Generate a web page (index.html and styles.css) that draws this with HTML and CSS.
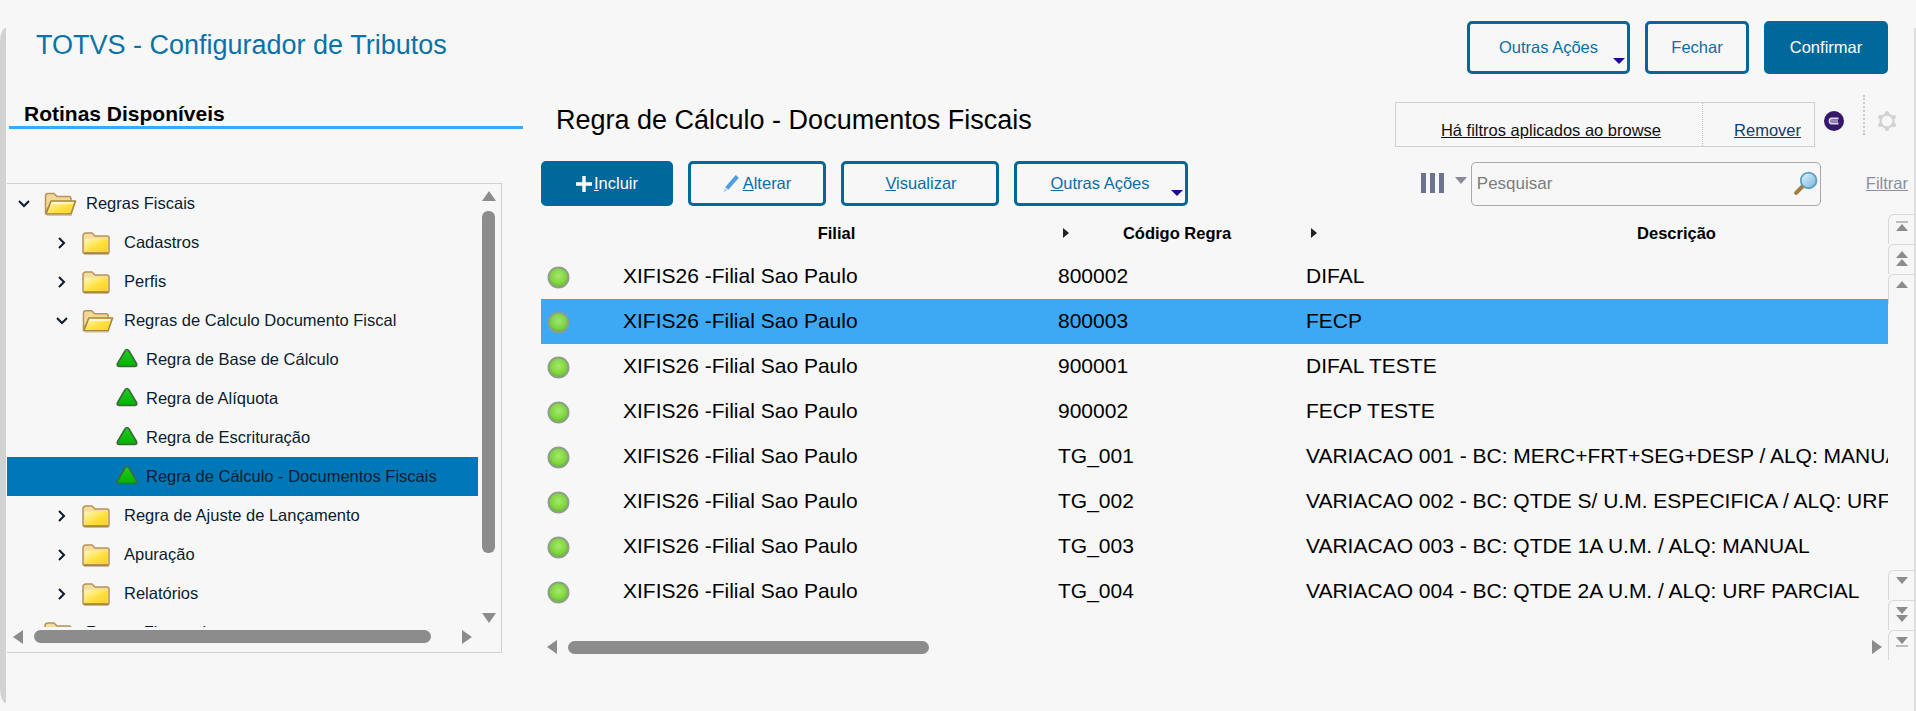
FILE: index.html
```html
<!DOCTYPE html>
<html>
    <head>
        <title>TOTVS - Configurador de Tributos</title>
        <meta charset="UTF-8">
        <meta name="viewport" content="width=device-width, initial-scale=1.0">
        <link rel="stylesheet" href="styles.css">
    </head>
    <body>
        <svg class="sprite" xmlns="http://www.w3.org/2000/svg">
            <defs>
                <linearGradient id="folder-fill" x1="0" y1="0" x2="1" y2="1">
                    <stop offset="0" stop-color="#fff6c0"/>
                    <stop offset="0.4" stop-color="#ffe866"/>
                    <stop offset="0.55" stop-color="#ffe040"/>
                    <stop offset="1" stop-color="#f8d028"/>
                </linearGradient>
                <radialGradient id="led-fill" cx="0.5" cy="0.42" r="0.55">
                    <stop offset="0" stop-color="#a6e86c"/>
                    <stop offset="0.7" stop-color="#7fd63c"/>
                    <stop offset="1" stop-color="#62b82a"/>
                </radialGradient>
                <linearGradient id="leaf-fill" x1="0" y1="0" x2="0" y2="1">
                    <stop offset="0" stop-color="#1ed01e"/>
                    <stop offset="1" stop-color="#04b004"/>
                </linearGradient>
                <linearGradient id="lens-fill" x1="0" y1="0" x2="1" y2="1">
                    <stop offset="0" stop-color="#e9f6fb"/>
                    <stop offset="1" stop-color="#6fb6dc"/>
                </linearGradient>
            </defs>
            <symbol id="folder" viewBox="0 0 28 24">
                <path d="M2 23.500H27" stroke="#cfcac0" stroke-width="1"/>
                <path d="M1 21V5Q1 2 4 2H10L13 5H25Q27 5 27 7V21Q27 22.500 25 22.500H3Q1 22.500 1 21Z" fill="#f3dc9c" stroke="#b8935a" stroke-width="1.500"/>
                <path d="M2.500 21V7.500H25.500V21Z" fill="url(#folder-fill)"/>
                <path d="M2 22H26" stroke="#a47f42" stroke-width="1.500"/>
            </symbol>
            <symbol id="folder-open" viewBox="0 0 33 24">
                <path d="M3 23.500H28" stroke="#cfcac0" stroke-width="1"/>
                <path d="M1.500 20V4Q1.500 1.500 4 1.500H10L13 4.500H25Q27 4.500 27 6.500V10H8Z" fill="#f0d896" stroke="#b8935a" stroke-width="1.500"/>
                <path d="M7 9H31.500L27 22H2Z" fill="url(#folder-fill)" stroke="#a98544" stroke-width="1.600" stroke-linejoin="round"/>
                <path d="M8 11H29" stroke="#fffdf0" stroke-width="1.500"/>
            </symbol>
            <symbol id="leaf" viewBox="0 0 22 21">
                <path d="M11 1.500Q12 1.500 13 3L20.500 15.500Q21.500 18.500 18.500 18.500H3.500Q0.500 18.500 1.500 15.500L9 3Q10 1.500 11 1.500Z" fill="url(#leaf-fill)" stroke="#3c6a3c" stroke-width="1.700"/>
            </symbol>
            <symbol id="led" viewBox="0 0 23 23">
                <circle cx="11.500" cy="11.500" r="10" fill="url(#led-fill)" stroke="#8f9f8a" stroke-width="2"/>
            </symbol>
        </svg>

        <div class="edge"></div>
        <div class="page">
            <header class="top">
                <div class="app-title">TOTVS - Configurador de Tributos</div>
                <div class="top-actions">
                    <button class="btn btn-more top-more">Outras Ações</button>
                    <button class="btn top-close">Fechar</button>
                    <button class="btn btn-primary top-ok">Confirmar</button>
                </div>
            </header>

            <div class="content">
                <aside class="side">
                    <div class="side-heading">Rotinas Disponíveis</div>
                    <div class="tree-box">
                        <div class="tree">
                            <div class="node lvl-0">
                                <svg class="chev" viewBox="0 0 12 12"><path d="M1 3L6 8L11 3"/></svg>
                                <svg class="ico-open-lg"><use href="#folder-open"/></svg>
                                <span>Regras Fiscais</span>
                            </div>
                            <div class="node lvl-1">
                                <svg class="chev" viewBox="0 0 12 12"><path d="M3 1L8 6L3 11"/></svg>
                                <svg class="ico-folder"><use href="#folder"/></svg>
                                <span>Cadastros</span>
                            </div>
                            <div class="node lvl-1">
                                <svg class="chev" viewBox="0 0 12 12"><path d="M3 1L8 6L3 11"/></svg>
                                <svg class="ico-folder"><use href="#folder"/></svg>
                                <span>Perfis</span>
                            </div>
                            <div class="node lvl-1">
                                <svg class="chev" viewBox="0 0 12 12"><path d="M1 3L6 8L11 3"/></svg>
                                <svg class="ico-open"><use href="#folder-open"/></svg>
                                <span>Regras de Calculo Documento Fiscal</span>
                            </div>
                            <div class="node lvl-2">
                                <svg class="ico-leaf"><use href="#leaf"/></svg>
                                <span>Regra de Base de Cálculo</span>
                            </div>
                            <div class="node lvl-2">
                                <svg class="ico-leaf"><use href="#leaf"/></svg>
                                <span>Regra de Alíquota</span>
                            </div>
                            <div class="node lvl-2">
                                <svg class="ico-leaf"><use href="#leaf"/></svg>
                                <span>Regra de Escrituração</span>
                            </div>
                            <div class="node lvl-2 node-active">
                                <svg class="ico-leaf"><use href="#leaf"/></svg>
                                <span>Regra de Cálculo - Documentos Fiscais</span>
                            </div>
                            <div class="node lvl-1">
                                <svg class="chev" viewBox="0 0 12 12"><path d="M3 1L8 6L3 11"/></svg>
                                <svg class="ico-folder"><use href="#folder"/></svg>
                                <span>Regra de Ajuste de Lançamento</span>
                            </div>
                            <div class="node lvl-1">
                                <svg class="chev" viewBox="0 0 12 12"><path d="M3 1L8 6L3 11"/></svg>
                                <svg class="ico-folder"><use href="#folder"/></svg>
                                <span>Apuração</span>
                            </div>
                            <div class="node lvl-1">
                                <svg class="chev" viewBox="0 0 12 12"><path d="M3 1L8 6L3 11"/></svg>
                                <svg class="ico-folder"><use href="#folder"/></svg>
                                <span>Relatórios</span>
                            </div>
                            <div class="node lvl-0">
                                <svg class="chev" viewBox="0 0 12 12"><path d="M3 1L8 6L3 11"/></svg>
                                <svg class="ico-folder-lg"><use href="#folder"/></svg>
                                <span>Regras Financeiras</span>
                            </div>
                        </div>
                        <div class="vbar">
                            <div class="arrow-up"></div>
                            <div class="vbar-thumb"></div>
                            <div class="arrow-down"></div>
                        </div>
                        <div class="hbar hbar-tree">
                            <div class="arrow-left"></div>
                            <div class="hbar-track"><div class="hbar-thumb thumb-tree"></div></div>
                            <div class="arrow-right"></div>
                        </div>
                    </div>
                </aside>

                <main class="main">
                    <div class="main-top">
                        <div class="main-title">Regra de Cálculo - Documentos Fiscais</div>
                        <div class="filter-box">
                            <a class="filter-note">Há filtros aplicados ao browse</a>
                            <a class="filter-remove">Remover</a>
                        </div>
                        <svg class="ico-badge" viewBox="0 0 20 20">
                            <circle cx="10" cy="10" r="10" fill="#35186a"/>
                            <path d="M14.500 7.500H7.500Q5.500 7.500 5.500 10Q5.500 12.500 7.500 12.500H14.500" fill="none" stroke="#dcd6ea" stroke-width="1.800"/>
                            <path d="M7 10H14" stroke="#dcd6ea" stroke-width="1.200"/>
                        </svg>
                        <div class="dots"></div>
                        <svg class="ico-gear" viewBox="0 0 20 20">
                            <circle cx="10" cy="10" r="6.500" fill="none" stroke="#d4d4d4" stroke-width="2.500"/>
                            <g fill="#d0d0d0">
                                <circle cx="10" cy="2" r="2"/>
                                <circle cx="10" cy="18" r="2"/>
                                <circle cx="3" cy="6" r="2"/>
                                <circle cx="17" cy="6" r="2"/>
                                <circle cx="3" cy="14" r="2"/>
                                <circle cx="17" cy="14" r="2"/>
                            </g>
                        </svg>
                    </div>

                    <div class="toolbar">
                        <button class="btn btn-primary tool-add">
                            <svg class="ico-plus" viewBox="0 0 14 14"><path d="M5.500 0H8.500V5.500H14V8.500H8.500V14H5.500V8.500H0V5.500H5.500Z"/></svg><span><u>I</u>ncluir</span>
                        </button>
                        <button class="btn tool-edit">
                            <svg class="ico-pencil" viewBox="0 0 16 18"><path d="M12 1L15 3.500L5 15L2 12.500Z" fill="#4f9fe0"/><path d="M1.500 13.500L4 15.500L0.500 17.500Z" fill="#a9cdea"/></svg><span><u>A</u>lterar</span>
                        </button>
                        <button class="btn tool-view"><span><u>V</u>isualizar</span></button>
                        <button class="btn btn-more tool-more"><span><u>O</u>utras Ações</span></button>

                        <div class="search-group">
                            <div class="col-toggle"><i></i><i></i><i></i></div>
                            <div class="col-caret"></div>
                            <div class="search">
                                <span class="search-text">Pesquisar</span>
                                <svg class="ico-lens" viewBox="0 0 24 24">
                                    <path d="M10 14L3 21" stroke="#a67c45" stroke-width="4" stroke-linecap="round"/>
                                    <circle cx="15" cy="9" r="7.500" fill="url(#lens-fill)" stroke="#5f9fc4" stroke-width="1.800"/>
                                </svg>
                            </div>
                            <a class="filter-link">Filtrar</a>
                        </div>
                    </div>

                    <div class="browse">
                        <div class="browse-body">
                            <div class="row row-head">
                                <div></div>
                                <div class="head-cell head-filial"><span>Filial</span></div>
                                <div class="head-cell head-code"><b class="sort"></b><span>Código Regra</span></div>
                                <div class="head-cell head-desc"><b class="sort"></b><span>Descrição</span></div>
                            </div>
                            <div class="row">
                                <div class="status"><svg class="ico-led"><use href="#led"/></svg></div>
                                <div>XIFIS26 -Filial Sao Paulo</div>
                                <div>800002</div>
                                <div>DIFAL</div>
                            </div>
                            <div class="row row-active">
                                <div class="status"><svg class="ico-led"><use href="#led"/></svg></div>
                                <div>XIFIS26 -Filial Sao Paulo</div>
                                <div>800003</div>
                                <div>FECP</div>
                            </div>
                            <div class="row">
                                <div class="status"><svg class="ico-led"><use href="#led"/></svg></div>
                                <div>XIFIS26 -Filial Sao Paulo</div>
                                <div>900001</div>
                                <div>DIFAL TESTE</div>
                            </div>
                            <div class="row">
                                <div class="status"><svg class="ico-led"><use href="#led"/></svg></div>
                                <div>XIFIS26 -Filial Sao Paulo</div>
                                <div>900002</div>
                                <div>FECP TESTE</div>
                            </div>
                            <div class="row">
                                <div class="status"><svg class="ico-led"><use href="#led"/></svg></div>
                                <div>XIFIS26 -Filial Sao Paulo</div>
                                <div>TG_001</div>
                                <div>VARIACAO 001 - BC: MERC+FRT+SEG+DESP / ALQ: MANUAL</div>
                            </div>
                            <div class="row">
                                <div class="status"><svg class="ico-led"><use href="#led"/></svg></div>
                                <div>XIFIS26 -Filial Sao Paulo</div>
                                <div>TG_002</div>
                                <div>VARIACAO 002 - BC: QTDE S/ U.M. ESPECIFICA / ALQ: URF PARCIAL</div>
                            </div>
                            <div class="row">
                                <div class="status"><svg class="ico-led"><use href="#led"/></svg></div>
                                <div>XIFIS26 -Filial Sao Paulo</div>
                                <div>TG_003</div>
                                <div>VARIACAO 003 - BC: QTDE 1A U.M. / ALQ: MANUAL</div>
                            </div>
                            <div class="row">
                                <div class="status"><svg class="ico-led"><use href="#led"/></svg></div>
                                <div>XIFIS26 -Filial Sao Paulo</div>
                                <div>TG_004</div>
                                <div>VARIACAO 004 - BC: QTDE 2A U.M. / ALQ: URF PARCIAL</div>
                            </div>
                            <div class="hbar hbar-browse">
                                <div class="arrow-left"></div>
                                <div class="hbar-track"><div class="hbar-thumb thumb-browse"></div></div>
                                <div class="arrow-right"></div>
                            </div>
                        </div>
                        <div class="stepper">
                            <div class="step-group">
                                <div class="step"><em class="bar"></em><em class="up"></em></div>
                                <div class="step"><em class="up"></em><em class="up"></em></div>
                                <div class="step"><em class="up"></em></div>
                            </div>
                            <div class="step-group">
                                <div class="step"><em class="down"></em></div>
                                <div class="step"><em class="down"></em><em class="down"></em></div>
                                <div class="step"><em class="down"></em><em class="bar"></em></div>
                            </div>
                        </div>
                    </div>
                </main>
            </div>
        </div>
        <div class="edge-right"></div>
    </body>
</html>
```

FILE: styles.css
```css
* {
  margin: 0;
  padding: 0;
  box-sizing: border-box;
}

body {
  font-family: "Liberation Sans", Arial, sans-serif;
  background-color: #f7f7f7;
  color: #000;
  width: 1916px;
  height: 711px;
  overflow: hidden;
  display: flex;
}

.sprite {
  width: 0;
  height: 0;
  flex: none;
}

.edge {
  width: 6px;
  margin: 28px 0 8px;
  background-color: #d2d2d2;
  border-radius: 6px 0 0 6px / 14px 0 0 14px;
  flex: none;
}

.edge-right {
  width: 2px;
  margin-top: 28px;
  background-color: #dedede;
  flex: none;
}

.page {
  width: 1908px;
  flex: none;
}

/* top bar */
.top {
  height: 95px;
  padding: 21px 26px 0 30px;
  display: flex;
  justify-content: space-between;
  align-items: flex-start;
}

.app-title {
  font-size: 27px;
  line-height: 30px;
  margin-top: 9px;
  color: #0a72a8;
}

.top-actions {
  display: flex;
  gap: 15px;
}

.btn {
  position: relative;
  height: 45px;
  font-family: inherit;
  font-size: 16.5px;
  color: #0b6ea6;
  background-color: #f7f7f7;
  border: 3px solid #00689a;
  border-radius: 5px;
  display: flex;
  align-items: center;
  justify-content: center;
}

.btn u {
  text-decoration-thickness: 1px;
}

.btn-primary {
  background-color: #00689a;
  color: #fff;
}

.btn-more::after {
  content: "";
  position: absolute;
  right: 2px;
  bottom: 7px;
  border-left: 6px solid transparent;
  border-right: 6px solid transparent;
  border-top: 6px solid #1a0a96;
}

.top-actions .btn {
  height: 53px;
}

.top-more {
  width: 163px;
}

.top-close {
  width: 104px;
}

.top-ok {
  width: 124px;
}

.content {
  display: flex;
}

/* left panel */
.side {
  width: 525px;
  flex: none;
}

.side-heading {
  margin: 0 8px 0 3px;
  padding: 6px 0 0 15px;
  height: 34px;
  font-size: 21px;
  line-height: 26px;
  font-weight: 700;
  border-bottom: 3px solid #3da9f5;
}

.tree-box {
  margin: 54px 0 0 1px;
  width: 495px;
  height: 470px;
  border-top: 1px solid #d0d0d0;
  border-right: 1px solid #d0d0d0;
  border-bottom: 1px solid #d0d0d0;
  display: grid;
  grid-template-columns: 471px 1fr;
  grid-template-rows: 443px 1fr;
}

.tree {
  overflow: hidden;
}

.node {
  height: 39px;
  display: flex;
  align-items: center;
  font-size: 16.5px;
  color: #0a1c30;
  white-space: nowrap;
}

.node-active {
  background-color: #0078b8;
}

.lvl-0 {
  padding-left: 11px;
}

.lvl-1 {
  padding-left: 49px;
}

.lvl-2 {
  padding-left: 109px;
}

.chev {
  width: 12px;
  height: 12px;
  fill: none;
  stroke: #0a1c30;
  stroke-width: 2;
  flex: none;
}

.ico-open-lg {
  width: 33px;
  height: 24px;
  margin: 0 9px 0 14px;
  flex: none;
}

.ico-folder-lg {
  width: 28px;
  height: 24px;
  margin: 0 14px;
  flex: none;
}

.ico-folder {
  width: 28px;
  height: 24px;
  margin: 0 14px;
  flex: none;
}

.ico-open {
  width: 32px;
  height: 24px;
  margin: 0 10px 0 14px;
  flex: none;
}

.ico-leaf {
  width: 22px;
  height: 21px;
  margin: -2px 8px 0 0;
  flex: none;
}

.vbar {
  padding: 7px 5px 0 3px;
  display: flex;
  flex-direction: column;
  align-items: center;
}

.vbar-thumb {
  width: 13px;
  height: 342px;
  margin: 10px 0 60px;
  background-color: #8c8c8c;
  border-radius: 6px;
}

.hbar {
  display: flex;
  align-items: center;
}

.hbar-tree {
  grid-column: 1 / 3;
  padding: 0 29px 6px 6px;
}

.hbar-track {
  flex: 1;
}

.hbar-thumb {
  height: 13px;
  background-color: #8c8c8c;
  border-radius: 7px;
}

.thumb-tree {
  width: 397px;
  margin-left: 11px;
}

.thumb-browse {
  width: 361px;
  margin-left: 11px;
}

.arrow-up,
.arrow-down,
.arrow-left,
.arrow-right {
  width: 0;
  height: 0;
  flex: none;
}

.arrow-up {
  border-left: 7px solid transparent;
  border-right: 7px solid transparent;
  border-bottom: 10px solid #8c8c8c;
}

.arrow-down {
  border-left: 7px solid transparent;
  border-right: 7px solid transparent;
  border-top: 10px solid #8c8c8c;
}

.arrow-left {
  border-top: 7px solid transparent;
  border-bottom: 7px solid transparent;
  border-right: 10px solid #8c8c8c;
}

.arrow-right {
  border-top: 7px solid transparent;
  border-bottom: 7px solid transparent;
  border-left: 10px solid #8c8c8c;
}

/* right panel */
.main {
  width: 1383px;
  padding-left: 10px;
}

.main-top {
  height: 66px;
  padding-right: 17px;
  display: flex;
  align-items: flex-start;
}

.main-title {
  margin: 9px 0 0 15px;
  font-size: 27px;
  line-height: 32px;
}

.filter-box {
  margin: 7px 0 0 auto;
  width: 420px;
  height: 45px;
  border: 1px solid #d0d0d0;
  display: flex;
  font-size: 16.5px;
}

.filter-note {
  width: 307px;
  padding: 18px 0 0 4px;
  text-align: center;
  text-decoration: underline;
  border-right: 1px dotted #bbb;
  color: #111;
}

.filter-remove {
  flex: 1;
  padding: 18px 13px 0 0;
  text-align: right;
  text-decoration: underline;
  color: #0a3f6e;
}

.ico-badge {
  width: 20px;
  height: 20px;
  margin: 16px 0 0 9px;
  flex: none;
}

.dots {
  width: 1px;
  height: 40px;
  margin-left: 19px;
  border-left: 2px dotted #ccc;
  flex: none;
}

.ico-gear {
  width: 20px;
  height: 20px;
  margin: 16px 0 0 12px;
  flex: none;
}

.toolbar {
  height: 45px;
  margin-bottom: 8px;
  display: flex;
  gap: 15px;
}

.tool-add {
  width: 132px;
}

.tool-edit {
  width: 138px;
}

.tool-view {
  width: 158px;
  padding-left: 2px;
}

.tool-more {
  width: 174px;
  padding-right: 2px;
}

.ico-plus {
  width: 16px;
  height: 16px;
  fill: #fff;
  margin-right: 2px;
}

.ico-pencil {
  width: 17px;
  height: 19px;
  margin-right: 3px;
}

.search-group {
  margin-left: auto;
  padding-right: 6px;
  display: flex;
  align-items: center;
}

.col-toggle {
  display: flex;
  gap: 4px;
  margin-bottom: 2px;
}

.col-toggle i {
  display: block;
  width: 5px;
  height: 20px;
  background-color: #6f7290;
}

.col-caret {
  margin: 0 4px 6px 11px;
  border-left: 6px solid transparent;
  border-right: 6px solid transparent;
  border-top: 7px solid #8a8a9a;
}

.search {
  width: 350px;
  height: 44px;
  padding: 0 2px 0 5px;
  border: 1px solid #a8a8a8;
  border-radius: 5px;
  display: flex;
  align-items: center;
  justify-content: space-between;
}

.search-text {
  font-size: 17px;
  color: #7c7c7c;
}

.ico-lens {
  width: 25px;
  height: 25px;
}

.filter-link {
  margin-left: 45px;
  font-size: 16.5px;
  color: #8a8fa0;
  text-decoration: underline;
}

/* browse table */
.browse {
  display: flex;
}

.browse-body {
  width: 1347px;
  overflow: hidden;
  flex: none;
}

.row {
  width: 2100px;
  height: 45px;
  padding-bottom: 2px;
  display: grid;
  grid-template-columns: 82px 435px 248px 740px;
  align-items: center;
  font-size: 21px;
  white-space: nowrap;
}

.row-active {
  background-color: #3da9f5;
}

.row-head {
  height: 40px;
  font-size: 16.5px;
  font-weight: 700;
}

.head-cell {
  display: flex;
  align-items: center;
}

.head-cell span {
  flex: 1;
  text-align: center;
}

.head-filial {
  padding-right: 8px;
}

.head-code {
  padding-right: 21px;
}

.head-desc {
  padding-right: 10px;
}

.sort {
  margin-left: 5px;
  width: 0;
  height: 0;
  border-top: 5px solid transparent;
  border-bottom: 5px solid transparent;
  border-left: 6px solid #222;
}

.status {
  padding: 4px 0 0 6px;
  display: flex;
}

.ico-led {
  width: 23px;
  height: 23px;
}

.row-active .ico-led {
  opacity: 0.95;
}

.hbar-browse {
  width: 1347px;
  margin-top: 26px;
  padding: 0 6px;
}

.stepper {
  height: 446px;
  flex: 1;
  display: flex;
  flex-direction: column;
  justify-content: space-between;
}

.step {
  height: 30px;
  padding-top: 6px;
  border-top: 1px solid #d8d8d8;
  border-left: 1px solid #d8d8d8;
  border-radius: 6px 0 0 0;
  display: flex;
  flex-direction: column;
  align-items: center;
  gap: 1px;
}

.step em {
  display: block;
  width: 0;
  height: 0;
}

.step .up {
  border-left: 6px solid transparent;
  border-right: 6px solid transparent;
  border-bottom: 7px solid #8c8c8c;
}

.step .down {
  border-left: 6px solid transparent;
  border-right: 6px solid transparent;
  border-top: 7px solid #8c8c8c;
}

.step .bar {
  width: 12px;
  height: 2px;
  background-color: #bdbdbd;
}
```
